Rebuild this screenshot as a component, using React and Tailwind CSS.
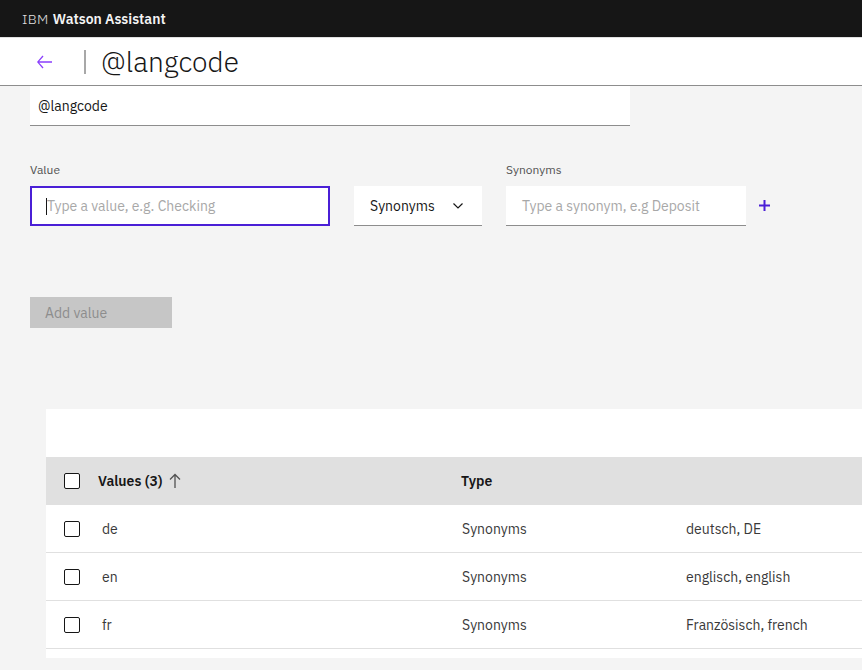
import React from 'react';

const font = { fontFamily: '"IBM Plex Sans", Inter, "Liberation Sans", sans-serif' };

const Checkbox = () => (
  <span className="block h-4 w-4 rounded-[2px] border border-[#161616] bg-white" />
);

const rows = [
  { value: 'de', type: 'Synonyms', synonyms: 'deutsch, DE' },
  { value: 'en', type: 'Synonyms', synonyms: 'englisch, english' },
  { value: 'fr', type: 'Synonyms', synonyms: 'Französisch, french' },
];

const App = () => {
  return (
    <div className="h-[670px] w-[862px] overflow-hidden bg-[#f4f4f4] text-[#161616]" style={font}>
      {/* Top shell bar */}
      <header className="flex h-[37px] items-center bg-[#161616] pl-[22px] text-sm text-[#f4f4f4]">
        <span className="font-light tracking-wide text-[#e0e0e0]">IBM</span>
        <span className="ml-1 font-semibold">Watson Assistant</span>
      </header>

      {/* Page title */}
      <div className="flex h-[49px] items-center border-t border-b border-t-[#e0e0e0] border-b-[#8d8d8d] bg-white">
        <button className="ml-[37px] flex h-4 w-4 items-center justify-center text-[#8a3ffc]">
          <svg width="16" height="16" viewBox="0 0 16 16" fill="currentColor">
            <path d="M6.5 13.5 2.2 8.75H15v-1.5H2.2L6.5 2.5 5.5 1.5 0 8l5.5 6.5z" />
          </svg>
        </button>
        <span className="ml-[31px] h-6 w-[2px] bg-[#a8a8a8]" />
        <h1 className="ml-[15px] text-[28px] font-light leading-none">@langcode</h1>
      </div>

      {/* Form */}
      <div className="pl-[30px]">
        <div className="flex h-10 w-[600px] items-center border-b border-[#8d8d8d] bg-white pl-2 text-sm">
          @langcode
        </div>

        <div className="mt-[36px] flex items-end">
          <div>
            <label className="mb-2 block text-xs leading-4 text-[#525252]">Value</label>
            <div className="flex h-10 w-[300px] items-center border-2 border-[#4a1fd6] bg-white pl-[14px] text-sm">
              <span className="h-[17px] w-px bg-[#161616]" />
              <span className="text-[#a8a8a8]">Type a value, e.g. Checking</span>
            </div>
          </div>

          <button className="ml-6 flex h-10 w-32 items-center justify-between border-b border-[#8d8d8d] bg-white pl-4 pr-[19px] text-sm">
            <span>Synonyms</span>
            <svg width="10" height="6" viewBox="0 0 10 6" fill="none" stroke="#161616" strokeWidth="1.2">
              <path d="M0.5 0.5 5 5 9.5 0.5" />
            </svg>
          </button>

          <div className="ml-6">
            <label className="mb-2 block text-xs leading-4 text-[#525252]">Synonyms</label>
            <div className="flex h-10 w-[240px] items-center border-b border-[#8d8d8d] bg-white pl-4 text-sm text-[#a8a8a8]">
              Type a synonym, e.g Deposit
            </div>
          </div>

          <button className="mb-[15px] ml-[12px] flex h-3 w-3 items-center justify-center">
            <svg width="11" height="11" viewBox="0 0 11 11" fill="#4a1fd6">
              <rect x="4.5" y="0" width="2" height="11" />
              <rect x="0" y="4.5" width="11" height="2" />
            </svg>
          </button>
        </div>

        <button className="mt-[71px] flex h-[31px] w-[142px] items-center bg-[#c6c6c6] pl-[15px] text-sm text-[#8d8d8d]">
          Add value
        </button>
      </div>

      {/* Table */}
      <div className="ml-[46px] mt-[81px] w-[840px] bg-white text-sm">
        <div className="h-12" />
        <div className="flex h-12 items-center bg-[#e0e0e0] font-semibold">
          <div className="flex w-[52px] shrink-0 justify-center">
            <Checkbox />
          </div>
          <div className="flex w-[363px] shrink-0 items-center gap-[6px]">
            <span>Values (3)</span>
            <svg width="12" height="16" viewBox="0 0 12 16" fill="none" stroke="#525252" strokeWidth="1.3">
              <path d="M6 15V1.5M1 6.5 6 1.5l5 5" />
            </svg>
          </div>
          <div>Type</div>
        </div>
        {rows.map((r) => (
          <div key={r.value} className="flex h-12 items-center border-b border-[#e0e0e0] text-[#393939]">
            <div className="flex w-[52px] shrink-0 justify-center">
              <Checkbox />
            </div>
            <div className="w-[364px] shrink-0 pl-1">{r.value}</div>
            <div className="w-[224px] shrink-0">{r.type}</div>
            <div>{r.synonyms}</div>
          </div>
        ))}
        <div className="h-[9px]" />
      </div>
    </div>
  );
};

export default App;
